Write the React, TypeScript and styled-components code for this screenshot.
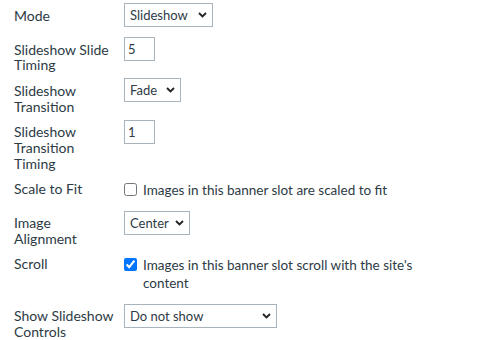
import React from "react";
import styled, { createGlobalStyle } from "styled-components";

const Global = createGlobalStyle`
  html, body { margin: 0; padding: 0; background: #ffffff; }
  body {
    font-family: Lato, "Noto Sans", sans-serif;
    font-size: 14px;
    color: #2d3b45;
  }
`;

const Form = styled.form`
  padding: 3px 40px 0 14px;
  margin: 0;
`;

const Row = styled.div`
  display: grid;
  grid-template-columns: 100px 1fr;
  column-gap: 10px;
  align-items: start;
`;

const Label = styled.label`
  padding: 4.5px 0 5.4px;
  font-size: 14px;
  line-height: 15.7px;
`;

const Control = styled.div<{ $check?: boolean }>`
  display: flex;
  align-items: flex-start;
  padding: ${(p) => (p.$check ? "4px 0 12px" : "0 0 10px")};
`;

const SelectWrap = styled.div<{ $w: number }>`
  position: relative;
  width: ${(p) => p.$w}px;
  height: 24px;
`;

const NativeSelect = styled.select`
  appearance: none;
  -webkit-appearance: none;
  box-sizing: border-box;
  width: 100%;
  height: 100%;
  margin: 0;
  padding: 0 18px 0 5px;
  border: 1px solid #a7b3bd;
  border-radius: 0;
  background: #ffffff;
  font-family: Lato, "Noto Sans", sans-serif;
  font-size: 13px;
  color: #2d3b45;
  outline: none;
`;

const Chevron = styled.svg`
  position: absolute;
  right: 6px;
  top: 50%;
  margin-top: -3px;
  pointer-events: none;
`;

const TextInput = styled.input`
  box-sizing: border-box;
  width: 31px;
  height: 24px;
  margin: 0;
  padding: 0 3px;
  border: 1px solid #a7b3bd;
  border-radius: 0;
  font-family: Lato, "Noto Sans", sans-serif;
  font-size: 13px;
  color: #2d3b45;
  outline: none;
`;

const Check = styled.input`
  flex: none;
  width: 13px;
  height: 13px;
  margin: 2px 6px 0 0;
`;

const CheckText = styled.span`
  font-size: 13.5px;
  line-height: 18px;
`;

type SelectProps = { width: number; value: string; options: string[] };

function Select({ width, value, options }: SelectProps) {
  return (
    <SelectWrap $w={width}>
      <NativeSelect defaultValue={value}>
        {options.map((o) => (
          <option key={o}>{o}</option>
        ))}
      </NativeSelect>
      <Chevron width="9" height="6" viewBox="0 0 9 6">
        <path d="M1 1 L4.5 4.5 L8 1" fill="none" stroke="#222" strokeWidth="1.8" />
      </Chevron>
    </SelectWrap>
  );
}

export default function App() {
  return (
    <>
      <Global />
      <Form>
        <Row>
          <Label>Mode</Label>
          <Control>
            <Select width={89} value="Slideshow" options={["Slideshow", "Static"]} />
          </Control>
        </Row>
        <Row>
          <Label>Slideshow Slide Timing</Label>
          <Control>
            <TextInput defaultValue="5" />
          </Control>
        </Row>
        <Row>
          <Label>Slideshow Transition</Label>
          <Control>
            <Select width={57} value="Fade" options={["Fade", "Slide"]} />
          </Control>
        </Row>
        <Row>
          <Label>Slideshow Transition Timing</Label>
          <Control>
            <TextInput defaultValue="1" />
          </Control>
        </Row>
        <Row>
          <Label>Scale to Fit</Label>
          <Control $check>
            <Check type="checkbox" />
            <CheckText>Images in this banner slot are scaled to fit</CheckText>
          </Control>
        </Row>
        <Row>
          <Label>Image Alignment</Label>
          <Control>
            <Select width={66} value="Center" options={["Left", "Center", "Right"]} />
          </Control>
        </Row>
        <Row>
          <Label>Scroll</Label>
          <Control $check>
            <Check type="checkbox" defaultChecked />
            <CheckText>Images in this banner slot scroll with the site's content</CheckText>
          </Control>
        </Row>
        <Row>
          <Label>Show Slideshow Controls</Label>
          <Control>
            <Select width={153} value="Do not show" options={["Do not show", "Show"]} />
          </Control>
        </Row>
      </Form>
    </>
  );
}
